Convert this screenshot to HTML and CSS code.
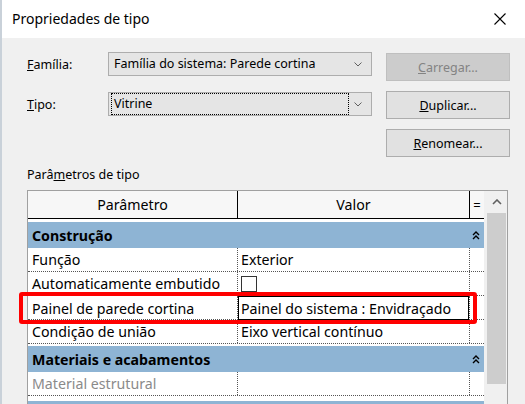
FILE: index.html
```html
<!DOCTYPE html>
<html lang="pt">
<head>
    <meta charset="UTF-8">
    <title>Propriedades de tipo</title>
    <link rel="stylesheet" href="styles.css">
</head>
<body>
    <div class="dialog">
        <div class="titlebar">
            <span class="title">Propriedades de tipo</span>
            <svg class="close" width="12" height="12" viewBox="0 0 12 12"><path d="M0.5 0.5 L11.5 11.5 M11.5 0.5 L0.5 11.5" stroke="#000" stroke-width="1.1" fill="none"/></svg>
        </div>

        <div class="content">
            <div class="top">
                <div class="fields">
                    <div class="field">
                        <span class="label"><u>F</u>amília:</span>
                        <div class="combo">
                            <span class="combo-text">Família do sistema: Parede cortina</span>
                            <svg class="chev" width="8" height="5" viewBox="0 0 8 5"><path d="M0.5 0.5 L4 4 L7.5 0.5" stroke="#606060" fill="none"/></svg>
                        </div>
                    </div>
                    <div class="field">
                        <span class="label"><u>T</u>ipo:</span>
                        <div class="combo">
                            <span class="combo-text focus">Vitrine</span>
                            <svg class="chev" width="8" height="5" viewBox="0 0 8 5"><path d="M0.5 0.5 L4 4 L7.5 0.5" stroke="#606060" fill="none"/></svg>
                        </div>
                    </div>
                </div>
                <div class="actions">
                    <button class="btn" disabled><u>C</u>arregar...</button>
                    <button class="btn"><u>D</u>uplicar...</button>
                    <button class="btn"><u>R</u>enomear...</button>
                </div>
            </div>

            <div class="section-label">Parâ<u>m</u>etros de tipo</div>

            <div class="frame">
                <div class="grid">
                    <div class="head">
                        <div class="hcell">Parâmetro</div>
                        <div class="hcell">Valor</div>
                        <div class="hcell eq">=</div>
                    </div>
                    <div class="rows">
                        <div class="group first">
                            <span>Construção</span>
                            <svg class="fold" width="8" height="9" viewBox="0 0 8 9"><path d="M1 4 L4 1 L7 4 M1 8 L4 5 L7 8" stroke="#000" stroke-width="1.4" fill="none"/></svg>
                        </div>
                        <div class="row">
                            <div class="cell">Função</div>
                            <div class="cell val">Exterior</div>
                            <div class="cell eq"></div>
                        </div>
                        <div class="row">
                            <div class="cell">Automaticamente embutido</div>
                            <div class="cell val"><span class="check"></span></div>
                            <div class="cell eq"></div>
                        </div>
                        <div class="row">
                            <div class="cell">Painel de parede cortina</div>
                            <div class="cell val"><span class="edit">Painel do sistema : Envidraçado</span></div>
                            <div class="cell eq"></div>
                        </div>
                        <div class="row">
                            <div class="cell">Condição de união</div>
                            <div class="cell val">Eixo vertical contínuo</div>
                            <div class="cell eq"></div>
                        </div>
                        <div class="group">
                            <span>Materiais e acabamentos</span>
                            <svg class="fold" width="8" height="9" viewBox="0 0 8 9"><path d="M1 4 L4 1 L7 4 M1 8 L4 5 L7 8" stroke="#000" stroke-width="1.4" fill="none"/></svg>
                        </div>
                        <div class="row">
                            <div class="cell muted">Material estrutural</div>
                            <div class="cell val"></div>
                            <div class="cell eq"></div>
                        </div>
                        <div class="group last"></div>
                    </div>
                </div>
                <div class="scrollbar">
                    <div class="arrow">
                        <svg width="10" height="6" viewBox="0 0 10 6"><path d="M1 5 L5 1 L9 5" stroke="#606060" stroke-width="1.6" fill="none"/></svg>
                    </div>
                    <div class="thumb"></div>
                </div>
                <div class="highlight"></div>
            </div>
        </div>
    </div>
</body>
</html>
```

FILE: styles.css
```css
* {
    box-sizing: border-box;
}
body {
    margin: 0;
    background: #f0f0f0;
    font-family: "Noto Sans", "Open Sans", sans-serif;
    color: #000;
    overflow: hidden;
}
.dialog {
    width: 525px;
    height: 404px;
    border-left: 2px solid #c9d1d9;
    background: #f0f0f0;
    overflow: hidden;
}
.titlebar {
    height: 38px;
    background: #fff;
    display: flex;
    align-items: center;
    justify-content: space-between;
    padding: 1px 19px 2px 10px;
}
.title {
    font-size: 14px;
}
.close {
    display: block;
}
.content {
    padding-left: 25px;
}
.top {
    display: flex;
    gap: 14px;
    height: 119px;
}
.fields {
    display: flex;
    flex-direction: column;
    gap: 16px;
    margin-top: 14px;
}
.field {
    display: flex;
    align-items: center;
}
.label {
    width: 81px;
    font-size: 12.5px;
}
.combo {
    width: 264px;
    height: 24px;
    background: #e5e5e5;
    border: 1px solid #adadad;
    display: flex;
    align-items: center;
    justify-content: space-between;
    padding: 0 9px 0 2px;
    font-size: 12.5px;
}
.combo-text {
    padding: 1px 2px 2px;
    line-height: 17px;
    border: 1px solid transparent;
}
.combo-text.focus {
    width: 238px;
    border: 1px dotted #000;
}
.actions {
    display: flex;
    flex-direction: column;
    gap: 10px;
    margin-top: 15px;
}
.btn {
    width: 124px;
    height: 28px;
    background: #e1e1e1;
    border: 1px solid #adadad;
    font-family: inherit;
    font-size: 12.5px;
    color: #000;
    padding: 0;
}
.btn:disabled {
    background: #cccccc;
    border-color: #bfbfbf;
    color: #838383;
}
.section-label {
    font-size: 12.5px;
    line-height: 16px;
    margin-top: 10px;
}
.frame {
    position: relative;
    margin-top: 7px;
    width: 481px;
    height: 240px;
    border: 1px solid #a0a0a0;
    border-bottom: none;
    display: flex;
}
.grid {
    width: 456px;
    background: #fff;
    font-size: 14.2px;
}
.head {
    display: grid;
    grid-template-columns: 209px 232px 15px;
    height: 28px;
    background: #f7f7f7;
    border-bottom: 1px solid #000;
}
.hcell {
    display: flex;
    align-items: center;
    justify-content: center;
}
.hcell + .hcell {
    border-left: 1px solid #000;
}
.hcell.eq {
    font-size: 13px;
}
.rows {
    padding-top: 3px;
}
.group {
    height: 26px;
    margin-top: 2px;
    background: #8eb4d4;
    font-weight: bold;
    display: flex;
    align-items: center;
    justify-content: space-between;
    padding: 0 4px 0 4px;
}
.group.first {
    margin-top: 0;
}
.group.last {
    margin-top: 5px;
}
.fold {
    display: block;
}
.row {
    display: grid;
    grid-template-columns: 209px 232px 15px;
    height: 24px;
    border-bottom: 1px dotted #555;
}
.cell {
    display: flex;
    align-items: center;
    padding-left: 4px;
    white-space: nowrap;
}
.cell.val {
    border-left: 1px dotted #555;
    padding-left: 3px;
}
.cell.eq {
    border-left: 1px dotted #555;
}
.cell.muted {
    color: #8a8a8a;
}
.check {
    width: 16px;
    height: 16px;
    border: 1px solid #333;
    background: #fff;
    margin-top: 1px;
}
.edit {
    margin-left: -3px;
    width: 232px;
    height: 24px;
    border: 1px solid #000;
    display: flex;
    align-items: center;
    padding-left: 2px;
}
.scrollbar {
    width: 23px;
    background: #f0f0f0;
    padding-left: 3px;
    padding-right: 1px;
}
.arrow {
    height: 22px;
    display: flex;
    align-items: center;
    justify-content: center;
}
.arrow svg {
    display: block;
}
.thumb {
    height: 171px;
    background: #cdcdcd;
}
.highlight {
    position: absolute;
    left: -9px;
    top: 101px;
    width: 458px;
    height: 32px;
    border: 4px solid #f00;
    border-radius: 3px;
}
```
